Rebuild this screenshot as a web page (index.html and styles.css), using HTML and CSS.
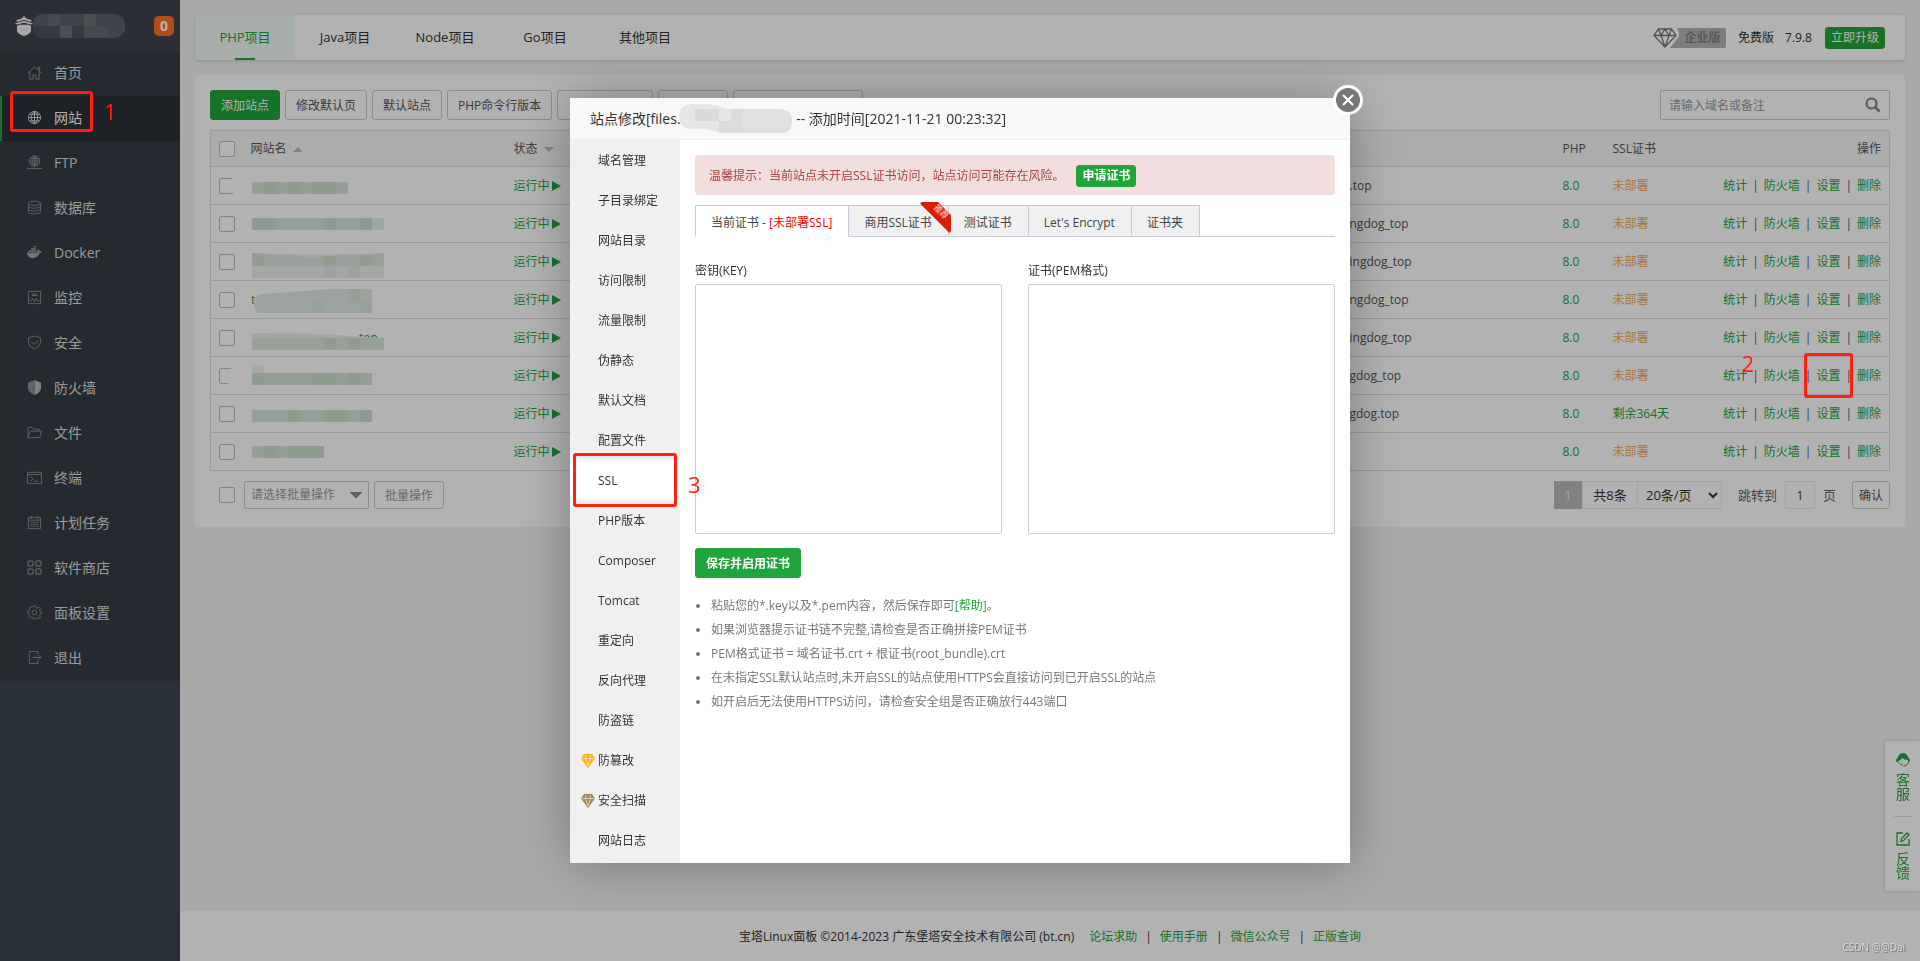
FILE: index.html
```html
<!DOCTYPE html>
<html lang="zh-CN">
<head>
<meta charset="utf-8">
<title>宝塔Linux面板</title>
<link rel="stylesheet" href="styles.css">
</head>
<body>
<div class="app">
  <aside class="side">
    <div class="side-head">
      <svg class="logo" width="18" height="20" viewBox="0 0 18 20"><path d="M9 0l2 2.200L17 4.500l-1.500 1.200L9 4 2.500 5.700 1 4.500l6-2.300zM0 7.200L9 5l9 2.200-1.500 1.300L9 6.800 1.500 8.500zM2 10l2-1.200h10L16 10v5.500q-2 3-7 4.500-5-1.500-7-4.500z" fill="#f0f0f0"/></svg>
      <svg class="smudge" width="92" height="24" viewBox="0 0 92 24"><defs><clipPath id="c1"><rect width="92" height="24" rx="10"/></clipPath></defs><g clip-path="url(#c1)"><path fill="#5b626b" d="M0 0h92v24H0z"/><path fill="#4c535c" d="M0 12h27v12H0zM39 12h12v12H39z"/><path fill="#6c7179" d="M27 12h12v12H27zM51 0h12v12H51z"/><path fill="#646a73" d="M51 12h24v12H51zM15 0h12v12H15z"/></g></svg>
      <span class="count">0</span>
    </div>
    <nav class="menu">
      <a href="#"><svg viewBox="0 0 16 16"><path d="M1 8.500L8 2l7 6.500M3 7.500V15h3.500v-4.500h3V15H13V7.500M11.500 5V2.500h2V7"/></svg>首页</a>
      <a href="#" class="on"><svg viewBox="0 0 16 16"><circle cx="8" cy="8" r="6.500"/><path d="M1.500 8h13M8 1.500v13M2.800 4.500h10.400M2.800 11.500h10.400M8 1.500C3.500 5 3.500 11 8 14.500M8 1.500c4.500 3.500 4.500 9.500 0 13"/></svg>网站</a>
      <a href="#"><svg viewBox="0 0 16 16"><circle cx="8" cy="6.500" r="5.500"/><path d="M2.500 6.500h11M8 1v11M3.500 3.800h9M3.500 9.300h9M8 1C4.500 4 4.500 9 8 12M8 1c3.500 3 3.500 8 0 11M0 14.300h16M6 14.500h4" /></svg>FTP</a>
      <a href="#"><svg viewBox="0 0 16 16"><ellipse cx="8" cy="3.500" rx="6.500" ry="2.300"/><path d="M1.500 3.500v9c0 3 13 3 13 0v-9M1.500 6.500c0 3 13 3 13 0M1.500 9.500c0 3 13 3 13 0"/></svg>数据库</a>
      <a href="#"><svg viewBox="0 0 16 16"><path class="f" d="M0 8h11.500q1-1.500 0-3l.8-.5q1.200 1 1.300 2.200 1.500-.2 2.400.5-.8 1.500-2.800 1.500Q11.500 14 6 14 .5 14 0 8zM2 5.500h2v2H2zM4.500 5.500h2v2h-2zM7 5.500h2v2H7zM4.500 3h2v2h-2zM7 3h2v2H7zM9.500 5.500h1.800v2H9.500zM7.500 1h2v1.500h-2z"/></svg>Docker</a>
      <a href="#"><svg viewBox="0 0 16 16"><path d="M1.500 1.500h13v13h-13zM5 4.500h6M5 6h6M2.500 11.500h2l1.500-3 2 4 2-3.500 1 2.500h2.500"/></svg>监控</a>
      <a href="#"><svg viewBox="0 0 16 16"><path d="M8 1l6.500 2.200v5Q14 12.500 8 15 2 12.500 1.500 8.200v-5zM5 7.500L7.500 10 12 5.500"/></svg>安全</a>
      <a href="#"><svg viewBox="0 0 16 16"><path fill="#bbb" stroke="none" d="M8 0l7 3v6q-1 4.500-7 7z"/><path fill="#8b8f93" stroke="none" d="M8 0L1 3v6q1 4.500 7 7z"/></svg>防火墙</a>
      <a href="#"><svg viewBox="0 0 16 16"><path d="M1 13.500V2.500h4.500l1.500 2h6.500v2M1 13.500l2.500-7h12l-2 7z"/></svg>文件</a>
      <a href="#"><svg viewBox="0 0 16 16"><path d="M.5 2.500h15v12H.5zM.5 4.800h15M3.500 7l3 2.500-3 2.500M8 12h4" /></svg>终端</a>
      <a href="#"><svg viewBox="0 0 16 16"><path d="M1.500 2.500h13v12h-13zM1.500 5.500h13M4.500 1v3M11.500 1v3M4 8h2M7 8h2M10 8h2M4 10h2M7 10h2M10 10h2M4 12h2M7 12h2M10 12h2"/></svg>计划任务</a>
      <a href="#"><svg viewBox="0 0 16 16" stroke-width="1.300"><rect x="1" y="1" width="5.500" height="5.500" rx="1.500"/><rect x="9.500" y="1" width="5.500" height="5.500" rx="1.500"/><rect x="1" y="9.500" width="5.500" height="5.500" rx="1.500"/><rect x="9.500" y="9.500" width="5.500" height="5.500" rx="1.500"/></svg>软件商店</a>
      <a href="#"><svg viewBox="0 0 16 16"><path d="M6.800 1h2.400l.5 1.800 1.300.5 1.700-.9 1.600 1.600-.9 1.700.5 1.300 1.600.3v2.200l-1.600.5-.5 1.300.9 1.700-1.600 1.600-1.700-.9-1.300.5L9.200 15H6.800l-.5-1.700-1.300-.5-1.700.9-1.600-1.600.9-1.700-.5-1.300L1 8.900V6.700l1.600-.5.5-1.300-.9-1.700 1.600-1.600 1.700.9z"/><circle cx="8" cy="8" r="2.500"/></svg>面板设置</a>
      <a href="#"><svg viewBox="0 0 16 16"><path d="M11.500 5V1.500h-9v13h9V11M6 8h9M12.500 5.500L15 8l-2.500 2.500"/></svg>退出</a>
    </nav>
  </aside>

  <div class="body">
    <main class="main">
      <header class="topbar">
        <nav class="kinds"><a href="#" class="on">PHP项目</a><a href="#">Java项目</a><a href="#">Node项目</a><a href="#">Go项目</a><a href="#">其他项目</a></nav>
        <div class="ver">
          <span class="ent"><svg width="26" height="20" viewBox="0 0 26 20"><path fill="#b4b4b4" d="M24 0h2v20h-9l10-13z"/><path fill="none" stroke="#777" stroke-width="1.300" d="M5.500 1h13L23 7.500 12 19 1 7.500zM1 7.500h22M5.500 1L8 7.500 12 19l4-11.500L18.500 1M8 7.500L12 1l4 6.500"/></svg><b>企业版</b></span>
          <span class="free">免费版</span><span class="num">7.9.8</span>
          <button class="btn green small">立即升级</button>
        </div>
      </header>

      <section class="card">
        <div class="tools">
          <button class="btn green">添加站点</button><button class="btn">修改默认页</button><button class="btn">默认站点</button><button class="btn">PHP命令行版本</button><button class="btn w96"></button><button class="btn w70"></button><button class="btn w130"></button>
          <label class="search"><input type="text" placeholder="请输入域名或备注"><svg width="16" height="16" viewBox="0 0 16 16"><circle cx="6.500" cy="6.500" r="5" fill="none" stroke="#858585" stroke-width="2.200"/><path d="M10 10l4.500 4.500" stroke="#858585" stroke-width="2.600"/></svg></label>
        </div>
        <table class="sites">
          <colgroup><col class="c-check"><col class="c-name"><col><col class="c-note"><col class="c-php"><col class="c-ssl"><col class="c-op"></colgroup>
          <thead><tr><th><input type="checkbox"></th><th>网站名<i class="up"></i></th><th>状态<i class="down"></i></th><th></th><th>PHP</th><th>SSL证书</th><th class="r">操作</th></tr></thead>
          <tbody>
            <tr><td><input type="checkbox"></td><td><svg class="mosaic" viewBox="0 0 140 24"><path fill="#fff" d="M-21 9q3-9 13-9V22h-8q-5-6-5-13z"/><path fill="#d4e2d8" d="M1 8h96v12H1z"/><path fill="#cfdfcc" d="M13 8h12v12H13zM37 8h12v12H37zM61 8h24v12H61z"/></svg></td><td><a href="#" class="run">运行中</a></td><td>.top</td><td><a href="#">8.0</a></td><td><a href="#" class="no">未部署</a></td><td class="ops"><a href="#">统计</a><span>|</span><a href="#">防火墙</a><span>|</span><a href="#">设置</a><span>|</span><a href="#">删除</a></td></tr>
            <tr><td><input type="checkbox"></td><td><svg class="mosaic" viewBox="0 0 140 24"><path fill="#e6eee9" d="M1 6h132v12H1z"/><path fill="#d6e4da" d="M1 6h120v12H1z"/><path fill="#cbe0cf" d="M1 6h24v12H1zM73 6h12v12H73zM109 6h12v12h-12z"/></svg></td><td><a href="#" class="run">运行中</a></td><td>ngdog_top</td><td><a href="#">8.0</a></td><td><a href="#" class="no">未部署</a></td><td class="ops"><a href="#">统计</a><span>|</span><a href="#">防火墙</a><span>|</span><a href="#">设置</a><span>|</span><a href="#">删除</a></td></tr>
            <tr><td><input type="checkbox"></td><td><svg class="mosaic" viewBox="0 0 140 24"><path fill="#ebefec" d="M1 4h132v24H1z"/><path fill="#dbe6df" d="M1 3l60 4 72-4v13H1z"/><path fill="#d1e0cd" d="M1 3l12 1v12H1zM73 6h12v10H73zM109 5h12v11h-12z"/><path fill="#e1e9e5" d="M73 16h12v12H73zM97 16h12v12H97z"/></svg></td><td><a href="#" class="run">运行中</a></td><td>ingdog_top</td><td><a href="#">8.0</a></td><td><a href="#" class="no">未部署</a></td><td class="ops"><a href="#">统计</a><span>|</span><a href="#">防火墙</a><span>|</span><a href="#">设置</a><span>|</span><a href="#">删除</a></td></tr>
            <tr><td><input type="checkbox"></td><td><svg class="mosaic" viewBox="0 0 140 24"><text x="0" y="16">t</text><path fill="#e0e8e2" d="M3 12q0-5 8-6l30-2 36-3h44v24H7q-5-4-4-13z"/><path fill="#d7e4da" d="M61 13h12v12H61zM97 1h12v12H97zM109 13h12v12h-12z"/></svg></td><td><a href="#" class="run">运行中</a></td><td>ngdog_top</td><td><a href="#">8.0</a></td><td><a href="#" class="no">未部署</a></td><td class="ops"><a href="#">统计</a><span>|</span><a href="#">防火墙</a><span>|</span><a href="#">设置</a><span>|</span><a href="#">删除</a></td></tr>
            <tr><td><input type="checkbox"></td><td><svg class="mosaic" viewBox="0 0 140 24"><text x="108" y="16">top</text><path fill="#ededed" d="M1 7l70 1 62 4v12H1z"/><path fill="#d8e6dc" d="M1 12h132v12H1z"/><path fill="#cfe0cc" d="M73 12h12v12H73zM97 12h12v12H97z"/></svg></td><td><a href="#" class="run">运行中</a></td><td>ingdog_top</td><td><a href="#">8.0</a></td><td><a href="#" class="no">未部署</a></td><td class="ops"><a href="#">统计</a><span>|</span><a href="#">防火墙</a><span>|</span><a href="#">设置</a><span>|</span><a href="#">删除</a></td></tr>
            <tr><td><input type="checkbox"></td><td><svg class="mosaic" viewBox="0 0 140 24"><path fill="#fff" d="M-25 12q3-9 13-11V23h-8q-5-4-5-11z"/><path fill="#f0f2f0" d="M1 1h12v8H1z"/><path fill="#d6e4d8" d="M1 9h120v12H1z"/><path fill="#cbe0cc" d="M1 9h12v12H1zM61 9h24v12H61zM97 9h12v12H97z"/></svg></td><td><a href="#" class="run">运行中</a></td><td>gdog_top</td><td><a href="#">8.0</a></td><td><a href="#" class="no">未部署</a></td><td class="ops"><a href="#">统计</a><span>|</span><a href="#">防火墙</a><span>|</span><a href="#">设置</a><span>|</span><a href="#">删除</a></td></tr>
            <tr><td><input type="checkbox"></td><td><svg class="mosaic" viewBox="0 0 140 24"><path fill="#d6e4d9" d="M1 8h120v12H1z"/><path fill="#cbe0cd" d="M37 8h12v12H37zM73 8h24v12H73zM109 8h12v12h-12z"/></svg></td><td><a href="#" class="run">运行中</a></td><td>gdog.top</td><td><a href="#">8.0</a></td><td><a href="#">剩余364天</a></td><td class="ops"><a href="#">统计</a><span>|</span><a href="#">防火墙</a><span>|</span><a href="#">设置</a><span>|</span><a href="#">删除</a></td></tr>
            <tr><td><input type="checkbox"></td><td><svg class="mosaic" viewBox="0 0 140 24"><path fill="#d6e4d9" d="M1 6h72v12H1z"/><path fill="#cbe0cd" d="M13 6h12v12H13zM37 6h36v12H37z"/></svg></td><td><a href="#" class="run">运行中</a></td><td></td><td><a href="#">8.0</a></td><td><a href="#" class="no">未部署</a></td><td class="ops"><a href="#">统计</a><span>|</span><a href="#">防火墙</a><span>|</span><a href="#">设置</a><span>|</span><a href="#">删除</a></td></tr>
          </tbody>
        </table>
        <div class="under">
          <input type="checkbox">
          <select class="batch"><option>请选择批量操作</option></select>
          <button class="btn mute">批量操作</button>
          <div class="pager">
            <span class="cur">1</span><span class="total">共8条</span><select class="size"><option>20条/页</option></select>
            <label class="jump">跳转到<input type="text" value="1">页</label>
            <button class="btn tight">确认</button>
          </div>
        </div>
      </section>
    </main>
    <footer class="foot">宝塔Linux面板 ©2014-2023 广东堡塔安全技术有限公司 (bt.cn)<a href="#" class="first">论坛求助</a><span>|</span><a href="#">使用手册</a><span>|</span><a href="#">微信公众号</a><span>|</span><a href="#">正版查询</a></footer>
  </div>
</div>

<div class="helper">
  <a href="#"><svg width="14" height="14" viewBox="0 0 14 14"><path fill="#20a53a" d="M0 7.500Q0 5.500 1.500 5 3 0 7 0t5.500 5Q14 5.500 14 7.500 14 9.500 12 9.500V7Q8 7 6 5 4.500 7.500 2.500 8v1.500Q0 9.500 0 7.500z"/><path fill="none" stroke="#20a53a" d="M3 9.500Q4.500 12 7 12M12.500 9.500Q11 13 7.500 13"/></svg>客服</a>
  <a href="#"><svg width="14" height="14" viewBox="0 0 14 14"><path fill="none" stroke="#20a53a" stroke-width="1.300" d="M7 1H1v12h12V7M5 9.500l.5-3L11 1l2 2-5.500 5.500z"/></svg>反馈</a>
</div>

<div class="shade">
  <div class="dialog" role="dialog" aria-label="站点修改">
    <button class="close" aria-label="关闭"><svg width="12" height="12" viewBox="0 0 12 12"><path d="M1 1l10 10M11 1L1 11" stroke="#fff" stroke-width="2"/></svg></button>
    <div class="title">站点修改[files.<svg width="113" height="29" viewBox="0 0 113 29"><defs><clipPath id="c2"><path d="M12 0h16q10 1 18 5h55q12 1 12 12t-10 12H42q-5-2-15-4H12Q0 24 0 12 1 1 12 0z"/></clipPath></defs><g clip-path="url(#c2)"><path fill="#e6e6e6" d="M0 0h113v29H0z"/><path fill="#dbdbdb" d="M16 5h24v12H16zM52 5h12v24H52zM40 17h12v12H40z"/><path fill="#e0e0e0" d="M64 5h49v24H64z"/></g></svg> -- 添加时间[2021-11-21 00:23:32]</div>
    <div class="cols">
      <nav class="tabs-v">
        <a href="#">域名管理</a><a href="#">子目录绑定</a><a href="#">网站目录</a><a href="#">访问限制</a><a href="#">流量限制</a><a href="#">伪静态</a><a href="#">默认文档</a><a href="#">配置文件</a><a href="#" class="on">SSL</a><a href="#">PHP版本</a><a href="#">Composer</a><a href="#">Tomcat</a><a href="#">重定向</a><a href="#">反向代理</a><a href="#">防盗链</a>
        <a href="#" class="gem"><svg width="14" height="14" viewBox="0 0 14 14"><path fill="#fcae1d" d="M3 0h8l3 4.500L7 14 0 4.500z"/><path fill="none" stroke="#fff2cf" stroke-width=".7" d="M1 4.500h12M4.500 4.500L7 12l2.500-7.500M4.500 4.500L5 1M9.500 4.500L9 1"/></svg>防篡改</a>
        <a href="#" class="gem"><svg width="14" height="14" viewBox="0 0 14 14"><path fill="#a58758" d="M3 0h8l3 4.500L7 14 0 4.500z"/><path fill="none" stroke="#efe6d5" stroke-width=".7" d="M1 4.500h12M4.500 4.500L7 12l2.500-7.500M4.500 4.500L5 1M9.500 4.500L9 1"/></svg>安全扫描</a>
        <a href="#">网站日志</a>
      </nav>
      <div class="pane">
        <div class="alert">温馨提示：当前站点未开启SSL证书访问，站点访问可能存在风险。<button class="btn green small bold">申请证书</button></div>
        <div class="tabs-h"><a href="#" class="on">当前证书 - <em>[未部署SSL]</em></a><a href="#" class="hot">商用SSL证书<svg width="32" height="31" viewBox="0 0 32 31"><path fill="#d81e06" d="M0 1.500L2 0h16l13 13v16l-1.500 2z"/><text x="20" y="12" transform="rotate(45 20 11)" text-anchor="middle">推荐</text></svg></a><a href="#">测试证书</a><a href="#">Let's Encrypt</a><a href="#">证书夹</a></div>
        <div class="keys">
          <label>密钥(KEY)<textarea></textarea></label>
          <label>证书(PEM格式)<textarea></textarea></label>
        </div>
        <button class="btn green bold">保存并启用证书</button>
        <ul class="tips">
          <li>粘贴您的*.key以及*.pem内容，然后保存即可<a href="#">[帮助]</a>。</li>
          <li>如果浏览器提示证书链不完整,请检查是否正确拼接PEM证书</li>
          <li>PEM格式证书 = 域名证书.crt + 根证书(root_bundle).crt</li>
          <li>在未指定SSL默认站点时,未开启SSL的站点使用HTTPS会直接访问到已开启SSL的站点</li>
          <li>如开启后无法使用HTTPS访问，请检查安全组是否正确放行443端口</li>
        </ul>
      </div>
    </div>
  </div>
</div>

<div class="mark m1"><span>1</span></div>
<div class="mark m2"><span>2</span></div>
<div class="mark m3"><span>3</span></div>
<div class="stamp">CSDN @@Dai</div>
</body>
</html>
```

FILE: styles.css
```css
* { box-sizing: border-box; }
body { margin: 0; background: #f2f2f2; color: #333; font: 12px/18px "Open Sans", "Noto Sans CJK SC", sans-serif; }
a { color: #20a53a; text-decoration: none; }
button, input, select, textarea { font: inherit; color: inherit; margin: 0; }
svg { flex: none; }

.app { display: flex; min-height: 100vh; }
.side { width: 180px; flex: none; background: #3d4650; }
.side-head { height: 51px; display: flex; align-items: center; padding: 0 6px 0 15px; background: #3d444d; }
.side-head .count { margin-left: auto; width: 20px; height: 20px; border-radius: 5px; background: #ff6e23; color: #fff; font-weight: 700; font-size: 14px; line-height: 20px; text-align: center; }
.menu { background: #363d46; border-left: 2px solid #3a3e3e; }
.menu a { display: flex; align-items: center; gap: 12px; height: 45px; padding: 0 0 2px 25px; color: #ddd; font-size: 14px; line-height: 20px; }
.menu svg { width: 15px; height: 15px; fill: none; stroke: #8c9093; }
.menu svg .f { fill: #a5a5a5; stroke: none; }
.menu .on { background: #2c3036; color: #fff; border-left: 2px solid #20a53a; margin-left: -2px; }
.menu .on svg { stroke: #ddd; }

.body { flex: 1; min-width: 0; display: flex; flex-direction: column; }
.main { flex: 1; padding: 15px; }
.topbar { display: flex; justify-content: space-between; align-items: center; height: 45px; margin-bottom: 15px; background: #fff; border-radius: 4px; box-shadow: 0 1px 3px #ccc; overflow: hidden; }
.kinds { display: flex; }
.kinds a { position: relative; width: 100px; line-height: 45px; text-align: center; font-size: 13px; color: #333; }
.kinds .on { color: #20a53a; background: #f0f9f2; }
.kinds .on::after { content: ""; position: absolute; left: 40px; bottom: 0; width: 20px; height: 2px; background: #20a53a; }
.ver { display: flex; align-items: center; padding-right: 20px; }
.ent { display: flex; height: 20px; }
.ent b { width: 47px; background: #b4b4b4; color: #808080; line-height: 20px; text-align: center; border-radius: 0 2px 2px 0; }
.free { margin: 0 11px 0 12px; }
.num { margin-right: 13px; }

.btn { height: 30px; padding: 1px 10px 0; border: 1px solid #ccc; border-radius: 3px; background: #fff; color: #555; line-height: 18px; white-space: nowrap; }
.btn.green { background: #20a53a; border-color: #20a53a; color: #fff; }
.btn.small { height: 22px; padding: 0 5px; }
.btn.bold { font-weight: 700; }
.btn.mute { height: 28px; color: #999; }
.btn.tight { height: 28px; padding: 1px 6px 0; }
.w96 { width: 96px; }
.w70 { width: 70px; }
.w130 { width: 130px; }

.card { padding: 15px 15px 18px; background: #fff; border-radius: 4px; }
.tools { display: flex; gap: 5px; margin-bottom: 10px; }
.search { display: flex; align-items: center; margin-left: auto; width: 230px; height: 30px; padding: 0 8px; border: 1px solid #ccc; border-radius: 2px; }
.search input { flex: 1; min-width: 0; padding: 1px 0 0; border: 0; outline: 0; background: none; }
.search input::placeholder { color: #999; }

input[type=checkbox] { appearance: none; display: block; width: 16px; height: 16px; border: 1px solid #bbb; border-radius: 2px; background: #fff; }
.sites { width: 100%; table-layout: fixed; border-collapse: collapse; border: 1px solid #ddd; color: #555; }
.sites th { height: 36px; padding: 0 8px; background: #f7f7f7; text-align: left; font-weight: 400; }
.sites td { height: 38px; padding: 0 8px; border-top: 1px solid #ddd; white-space: nowrap; }
.c-check { width: 32px; }
.c-name { width: 263px; }
.c-note { width: 213px; }
.c-php { width: 50px; }
.c-ssl { width: 80px; }
.c-op { width: 205px; }
.sites th.r, .ops { text-align: right; }
.ops span { margin: 0 5px; }
.sites .no { color: #f0ad4e; }
.sites i { display: inline-block; margin-left: 6px; vertical-align: 1px; border: 5px solid transparent; }
.sites .up { border-top: 0; border-bottom-color: #bbb; }
.sites .down { border-bottom: 0; border-top-color: #bbb; }
.run::after { content: ""; display: inline-block; margin-left: 2px; vertical-align: -1px; border: 5px solid transparent; border-left: 9px solid #20a53a; border-right: 0; }
.mosaic { display: block; width: 140px; height: 24px; overflow: visible; font-size: 12px; fill: #20a53a; }
.under { display: flex; align-items: center; margin-top: 10px; padding-left: 9px; height: 28px; }
.under select { appearance: none; height: 28px; border: 1px solid #ccc; background: #fff no-repeat; }
.under .batch { width: 125px; margin: 0 5px 0 9px; padding: 0 6px; border-radius: 2px; color: #999; background-image: linear-gradient(to bottom right, #888 50%, transparent 51%), linear-gradient(to bottom left, #888 50%, transparent 51%); background-size: 6px 6px; background-position: 111px 10px, 105px 10px; }
.pager { display: flex; align-items: center; margin-left: auto; font-size: 13px; }
.pager span { height: 28px; line-height: 26px; text-align: center; border: 1px solid #ececec; }
.pager .cur { width: 28px; background: #b9b9b9; border-color: #b9b9b9; color: #f2f2f2; }
.pager .total { width: 56px; }
.pager .size { appearance: auto; width: 85px; padding: 0 4px; margin-left: -1px; border-color: #ececec; border-radius: 0; }
.jump { display: flex; align-items: center; gap: 8px; margin: 0 16px; color: #666; }
.jump input { width: 30px; height: 28px; border: 1px solid #ececec; text-align: center; font-size: 12px; color: #333; background: #fff; }
.pager .btn { font-size: 12px; }

.foot { height: 50px; padding-top: 1px; line-height: 50px; text-align: center; background: #fff; }
.foot span { margin: 0 8px; }
.foot .first { margin-left: 15px; }

.helper { position: fixed; right: 0; bottom: 70px; width: 35px; padding: 0 9px; border-radius: 4px 0 0 4px; background: #fff; box-shadow: 0 0 4px #ccc; }
.helper a { display: flex; flex-direction: column; align-items: center; gap: 6px; height: 75px; padding: 12px 2px 0; width: 18px; font-size: 14px; line-height: 14px; text-align: center; word-break: break-all; }
.helper a + a { padding-top: 15px; border-top: 1px solid #ddd; }

.shade { position: fixed; inset: 0; display: flex; align-items: center; justify-content: center; background: rgba(0, 0, 0, .3); }
.dialog { position: relative; width: 780px; background: #fff; box-shadow: 1px 1px 50px rgba(0, 0, 0, .3); }
.close { position: absolute; right: -13px; top: -13px; width: 30px; height: 30px; padding: 0; border: 3px solid #fff; border-radius: 50%; background: #777; display: flex; align-items: center; justify-content: center; }
.title { display: flex; align-items: center; height: 42px; padding-left: 20px; background: #f8f8f8; border-bottom: 1px solid #eee; font-size: 14px; white-space: pre; }
.title svg { margin: 0 1px 0 -2px; }
.cols { display: flex; }
.tabs-v { width: 110px; flex: none; padding-bottom: 3px; background: #f0f0f0; }
.tabs-v a { display: flex; align-items: center; height: 40px; padding: 2px 0 0 28px; color: #333; }
.tabs-v .on { background: #fff; }
.tabs-v .gem { padding-left: 11px; gap: 3px; }
.pane { flex: 1; min-width: 0; padding: 15px; }
.alert { display: flex; align-items: center; gap: 12px; height: 40px; margin-bottom: 10px; padding: 2px 0 0 14px; border-radius: 4px; background: #f2dede; color: #a94442; }
.tabs-h { display: flex; height: 32px; margin-bottom: 25px; box-shadow: inset 0 -1px #c8c8d8; }
.tabs-h a { position: relative; padding: 0 16px 0 15px; border: 1px solid #c8c8d8; border-left: 0; background: #f0f0f0; color: #444; line-height: 34px; white-space: nowrap; }
.tabs-h .on { border-left: 1px solid #c8c8d8; border-bottom-color: #fff; background: #fff; }
.tabs-h em { font-style: normal; color: #f00; }
.hot svg { position: absolute; right: -4px; top: -4px; z-index: 1; font-size: 8px; line-height: 8px; fill: #fff; }
.keys { display: flex; gap: 26px; margin-bottom: 14px; }
.keys label { flex: 1; display: flex; flex-direction: column; gap: 4px; }
.keys textarea { height: 250px; border: 1px solid #ccc; border-radius: 2px; resize: none; }
.tips { margin: 16px 0 0; padding-left: 16px; color: #777; line-height: 24px; }

/* annotations drawn above the page */
.mark { position: absolute; border: 3px solid #ff2010; border-radius: 3px; color: #ff2010; font-size: 22px; line-height: 24px; }
.mark span { position: absolute; }
.m1 { left: 10px; top: 91px; width: 83px; height: 41px; }
.m1 span { left: 91px; top: 5px; }
.m2 { right: 67px; top: 353px; width: 49px; height: 45px; }
.m2 span { right: 96px; top: -5px; }
.m3 { left: 573px; top: 453px; width: 104px; height: 54px; }
.m3 span { left: 112px; top: 16px; }
.stamp { position: fixed; right: 15px; bottom: 5px; font-size: 10px; color: #ddd; text-shadow: 1px 1px 1px #666; }
```
